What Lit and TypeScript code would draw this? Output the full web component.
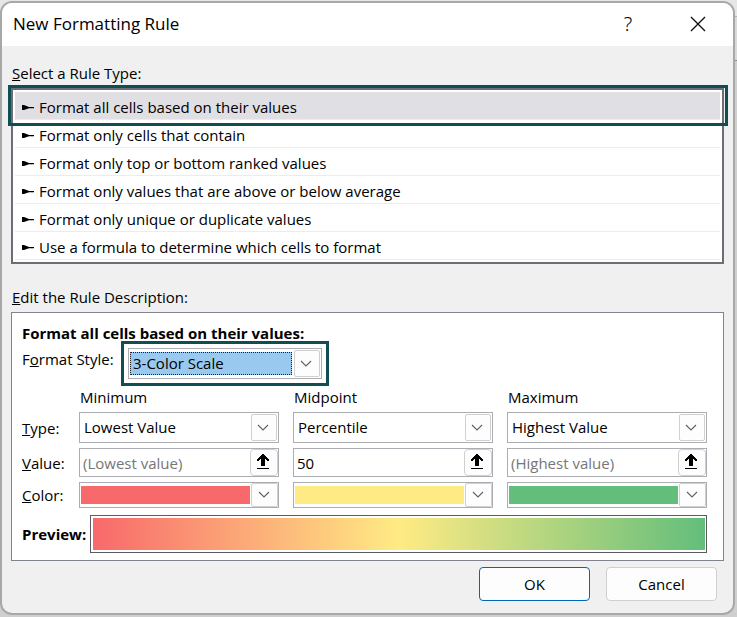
import { LitElement, html, css, nothing } from "lit";
import { customElement, property, state } from "lit/decorators.js";

const chevron = html`<svg viewBox="0 0 12 8" width="12" height="8" aria-hidden="true">
  <path d="M1 1l5 5l5 -5" fill="none" stroke="#606060" stroke-width="1.1" />
</svg>`;

const fieldStyles = css`
  * {
    box-sizing: border-box;
  }
  select,
  input,
  button {
    font: inherit;
    color: inherit;
    margin: 0;
    outline: none;
  }
  .box {
    position: relative;
    display: flex;
    border: 1px solid #abadb3;
    background: #fff;
  }
  .drop {
    display: flex;
    align-items: center;
    justify-content: center;
    width: 26px;
    padding-right: 2px;
    border: 1px solid #d0d0d0;
    border-radius: 2px;
    background: #fdfdfd;
    pointer-events: none;
  }
`;

@customElement("combo-box")
export class ComboBox extends LitElement {
  @property() label = "";
  @property() value = "";
  @property({ type: Boolean, reflect: true }) active = false;

  static styles = [
    fieldStyles,
    css`
      :host {
        display: block;
      }
      .box {
        height: 31px;
        padding: 1px;
      }
      select {
        flex: 1;
        min-width: 0;
        appearance: none;
        border: 0;
        padding: 0 30px 2px 3px;
        background: transparent;
      }
      .drop {
        position: absolute;
        top: 1px;
        right: 1px;
        bottom: 1px;
      }
      :host([active]) .box {
        padding: 3px 29px 3px 1px;
      }
      :host([active]) select {
        padding: 0 0 2px 2px;
        border: 1px dotted #222;
        background: #99c9ef;
      }
    `,
  ];

  render() {
    return html`<div class="box">
      <select aria-label=${this.label}>
        <option>${this.value}</option>
      </select>
      <span class="drop">${chevron}</span>
    </div>`;
  }
}

@customElement("range-box")
export class RangeBox extends LitElement {
  @property() label = "";
  @property() value = "";
  @property() hint = "";

  static styles = [
    fieldStyles,
    css`
      :host {
        display: block;
      }
      .box {
        height: 29px;
      }
      input {
        flex: 1;
        min-width: 0;
        border: 0;
        padding: 0 3px;
        background: transparent;
      }
      input::placeholder {
        color: #767676;
        opacity: 1;
      }
      .pick {
        display: flex;
        align-items: center;
        justify-content: center;
        width: 28px;
        padding: 0 2px 2px 0;
        border: 1px solid #d0d0d0;
        border-radius: 4px;
        background: #fdfdfd;
      }
    `,
  ];

  render() {
    return html`<div class="box">
      <input aria-label=${this.label} .value=${this.value} placeholder=${this.hint} />
      <button class="pick" aria-label="Select range">
        <svg viewBox="0 0 14 16" width="14" height="16" shape-rendering="crispEdges" aria-hidden="true">
          <path d="M6 0h2v1h1v1h1v1h1v1h1v1h1v2h-2v-1h-1v-1h-1v7h-4v-7h-1v1h-1v1h-2v-2h1v-1h1v-1h1v-1h1v-1h1z M1 14h12v1h-12z" />
        </svg>
      </button>
    </div>`;
  }
}

@customElement("color-box")
export class ColorBox extends LitElement {
  @property() label = "";
  @property() color = "";

  static styles = [
    fieldStyles,
    css`
      :host {
        display: block;
      }
      .box {
        width: 100%;
        height: 26px;
        padding: 0 0 0 1px;
        align-items: stretch;
      }
      .swatch {
        flex: 1;
        margin: 3px 1px 3px 0;
      }
      .drop {
        width: 27px;
      }
    `,
  ];

  render() {
    return html`<button class="box" aria-label=${this.label}>
      <span class="swatch" style="background:${this.color}"></span>
      <span class="drop">${chevron}</span>
    </button>`;
  }
}

const ruleTypes = [
  "Format all cells based on their values",
  "Format only cells that contain",
  "Format only top or bottom ranked values",
  "Format only values that are above or below average",
  "Format only unique or duplicate values",
  "Use a formula to determine which cells to format",
];

const points = [
  { name: "Minimum", type: "Lowest Value", value: "", hint: "(Lowest value)", color: "#f8696b" },
  { name: "Midpoint", type: "Percentile", value: "50", hint: "", color: "#ffeb84" },
  { name: "Maximum", type: "Highest Value", value: "", hint: "(Highest value)", color: "#63be7b" },
];

@customElement("app-root")
export class AppRoot extends LitElement {
  @state() private selected = 0;

  static styles = css`
    :host {
      display: block;
      min-height: 100vh;
      box-sizing: border-box;
      padding: 1px 2px 2px 0;
      background: linear-gradient(
        #e6e6e6 16px,
        #b4b4b4 16px 17px,
        #dadada 17px 60px,
        #8c8c8c 60px 61px,
        #cfcfcf 61px
      );
      font: 15px/20px "Open Sans", "Noto Sans", sans-serif;
      color: #000;
    }
    * {
      box-sizing: border-box;
    }
    button {
      font: inherit;
      color: inherit;
      margin: 0;
    }
    .dialog {
      border: 2px solid #a8a8a8;
      border-radius: 12px;
      background: #f0f0f0;
      overflow: hidden;
      padding-bottom: 12px;
    }
    .titlebar {
      display: flex;
      align-items: center;
      height: 43px;
      padding: 0 14px 2px 11px;
      background: #fff;
    }
    h1 {
      flex: 1;
      margin: 0;
      font-size: 17px;
      font-weight: 400;
    }
    .tool {
      display: flex;
      align-items: center;
      justify-content: center;
      width: 42px;
      height: 32px;
      margin-left: 28px;
      padding: 0;
      border: 0;
      background: none;
      font-size: 20px;
    }
    .help {
      font-family: "Noto Sans", sans-serif;
      font-weight: 300;
    }
    .body {
      padding: 17px 9px 0;
    }
    .caption {
      margin: 0 0 5px 1px;
    }
    .types {
      list-style: none;
      margin: 0 0 23px;
      padding: 2px;
      border: 2px solid #6b6e75;
      background: #fff;
    }
    .types li {
      position: relative;
      border-bottom: 1px solid #ececec;
    }
    .type {
      display: flex;
      align-items: center;
      gap: 5px;
      width: 100%;
      height: 27px;
      padding: 2px 7px 0;
      border: 0;
      background: none;
      text-align: left;
    }
    .type[aria-pressed="true"] {
      background: #e0dfe4;
    }
    .frame {
      position: absolute;
      inset: -7px -8px -7px -7px;
      border: 3px solid #104e54;
      pointer-events: none;
      z-index: 1;
    }
    .panel {
      border: 1px solid #80848c;
      background: #fff;
      padding: 10px 16px 7px 10px;
    }
    h2 {
      margin: 0;
      font-size: 15px;
      font-weight: 700;
    }
    .style {
      display: flex;
      align-items: flex-start;
      gap: 7px;
      padding-top: 6px;
    }
    .style label {
      flex: 0 0 92px;
      white-space: nowrap;
    }
    .marked {
      width: 208px;
      margin-top: -8px;
      padding: 4px;
      border: 3px solid #104e54;
    }
    .grid {
      display: grid;
      grid-template-columns: 43px repeat(3, minmax(0, 1fr));
      column-gap: 14px;
      row-gap: 5px;
      align-items: center;
      margin-top: 1px;
    }
    .head {
      padding-left: 1px;
    }
    .preview {
      display: flex;
      align-items: center;
      gap: 3px;
      margin-top: 7px;
    }
    .preview strong {
      flex: 0 0 65px;
    }
    .scale {
      flex: 1;
      height: 38px;
      border: 1px solid #5c5c60;
      padding: 2px 1px 2px 2px;
      background: linear-gradient(90deg, #f8696b, #ffeb84 50%, #63be7b) content-box;
    }
    .actions {
      display: flex;
      justify-content: flex-end;
      gap: 16px;
      padding: 6px 7px 0 0;
    }
    .action {
      width: 111px;
      height: 34px;
      border: 1px solid #d0d0d0;
      border-radius: 4px;
      background: #fdfdfd;
    }
    .primary {
      border-color: #0067b8;
    }
  `;

  render() {
    return html`<main class="dialog">
      <header class="titlebar">
        <h1>New Formatting Rule</h1>
        <button class="tool help" aria-label="Help">?</button>
        <button class="tool" aria-label="Close">
          <svg viewBox="0 0 16 16" width="16" height="16" aria-hidden="true">
            <path d="M1 1l14 14M15 1L1 15" stroke="#111" stroke-width="1.4" />
          </svg>
        </button>
      </header>
      <div class="body">
        <p class="caption"><u>S</u>elect a Rule Type:</p>
        <ul class="types">
          ${ruleTypes.map(
            (name, i) => html`<li>
              <button class="type" aria-pressed=${i === this.selected} @click=${() => (this.selected = i)}>
                <svg viewBox="0 0 12 8" width="12" height="8" aria-hidden="true">
                  <path d="M0 2H2L7 4H12V5.2H7L2 7H0z" />
                </svg>
                ${name}
              </button>
              ${i === this.selected ? html`<span class="frame"></span>` : nothing}
            </li>`,
          )}
        </ul>
        <p class="caption"><u>E</u>dit the Rule Description:</p>
        <section class="panel">
          <h2>Format all cells based on their values:</h2>
          <div class="style">
            <label for="style">F<u>o</u>rmat Style:</label>
            <div class="marked">
              <combo-box id="style" active label="Format Style" value="3-Color Scale"></combo-box>
            </div>
          </div>
          <div class="grid">
            <span></span>
            ${points.map((p) => html`<span class="head">${p.name}</span>`)}
            <span><u>T</u>ype:</span>
            ${points.map((p) => html`<combo-box label="${p.name} type" value=${p.type}></combo-box>`)}
            <span><u>V</u>alue:</span>
            ${points.map(
              (p) => html`<range-box label="${p.name} value" .value=${p.value} hint=${p.hint}></range-box>`,
            )}
            <span><u>C</u>olor:</span>
            ${points.map((p) => html`<color-box label="${p.name} color" color=${p.color}></color-box>`)}
          </div>
          <div class="preview">
            <strong>Preview:</strong>
            <div class="scale"></div>
          </div>
        </section>
        <div class="actions">
          <button class="action primary">OK</button>
          <button class="action">Cancel</button>
        </div>
      </div>
    </main>`;
  }
}
